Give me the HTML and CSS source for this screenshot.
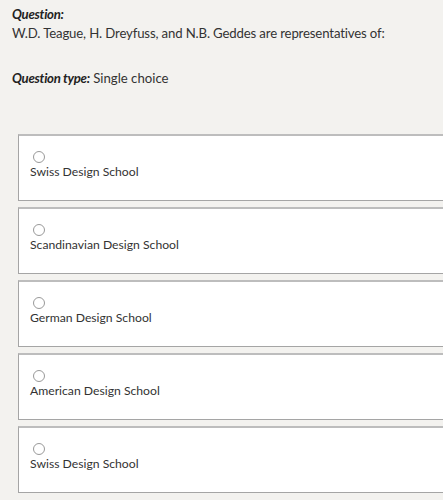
FILE: index.html
```html
<!DOCTYPE html>
<html>
<head>
<meta charset="utf-8">
<link rel="stylesheet" href="styles.css">
</head>
<body>
<div class="question">
  <div class="label">Question:</div>
  <div class="text">W.D. Teague, H. Dreyfuss, and N.B. Geddes are representatives of:</div>
</div>
<div class="qtype"><span class="label">Question type:</span> Single choice</div>
<div class="options">
  <div class="option"><span class="radio"></span><div class="otext">Swiss Design School</div></div>
  <div class="option"><span class="radio"></span><div class="otext">Scandinavian Design School</div></div>
  <div class="option"><span class="radio"></span><div class="otext">German Design School</div></div>
  <div class="option"><span class="radio"></span><div class="otext">American Design School</div></div>
  <div class="option"><span class="radio"></span><div class="otext">Swiss Design School</div></div>
</div>
</body>
</html>
```
FILE: styles.css
```css
html, body { margin: 0; padding: 0; }
body {
  background: #f3f2ef;
  font-family: Lato, "Noto Sans", sans-serif;
  font-size: 13.2px;
  color: #333;
  padding: 5px 0 0 12px;
  overflow: hidden;
}
.label { font-weight: bold; font-style: italic; color: #222; letter-spacing: -0.3px; }
.question { line-height: 19px; }
.text { line-height: 19px; letter-spacing: -0.15px; }
.qtype { margin-top: 26px; line-height: 19px; }
.options {
  margin-top: 46px;
  margin-left: 6px;
  display: flex;
  flex-direction: column;
  gap: 6px;
}
.option {
  background: #fff;
  border: 1px solid #a5a5a5;
  border-top: 2px solid #bdbdbd;
  border-right: none;
  padding: 15px 0 0 11px;
  box-sizing: border-box;
  height: 67px;
  margin-right: -20px;
}
.radio {
  display: block;
  width: 10px;
  height: 10px;
  border: 1px solid #999;
  border-radius: 50%;
  margin-left: 3px;
}
.otext { line-height: 18px; font-size: 12.2px; }
```
